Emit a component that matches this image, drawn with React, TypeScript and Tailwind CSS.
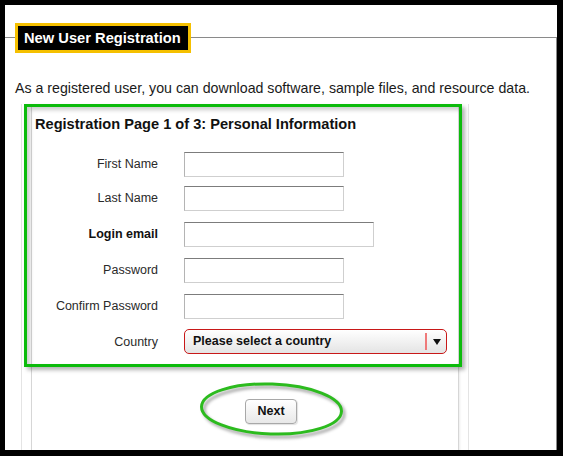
import React from "react";

function Field({ label, bold, width, mt }: { label: string; bold?: boolean; width: string; mt: string }) {
  return (
    <div className={`flex items-center h-[25px] ${mt}`}>
      <div className={`w-[126px] text-right text-[12.5px] leading-[15px] text-[#2a2a2a] ${bold ? "font-bold text-[#111]" : ""}`}>
        {label}
      </div>
      <input
        type="text"
        className={`ml-[26px] h-[25px] ${width} bg-white border border-[#cfcfcf] border-t-[#7c7c7c] border-l-[#b4b4b4] outline-none`}
      />
    </div>
  );
}

export default function App() {
  return (
    <div className="w-[563px] h-[456px] bg-black pt-[5px] pl-[5px] overflow-hidden">
      <div className="relative w-[552px] h-[445px] bg-white overflow-hidden font-['Liberation_Sans',Arial,sans-serif]">
        <div className="mt-[32px] h-[420px] border-t border-r border-[#8a8a8a] flex flex-col">
          <div className="ml-[10px] -mt-[15px] self-start border-[3px] border-[#f5c000] bg-black pl-[6px] pr-[7px] text-white font-bold text-[14.7px] leading-[24px]">
            New User Registration
          </div>
          <p className="mt-[27px] pl-[10px] text-[14.2px] leading-[16px] text-[#1a1a1a]">
            As a registered user, you can download software, sample files, and resource data.
          </p>
          <div className="ml-[16px] mt-[8px] w-[448px] flex-1 border-x border-[#e4e4e4] flex flex-col">
            <div className="ml-[9px] mt-[3px] w-[428px] flex-1 border-x border-[#d6d6d6] shadow-[1px_0_2px_rgba(0,0,0,0.08)] flex flex-col">
              <h2 className="pt-[9px] pl-[3px] font-bold text-[14.6px] leading-[17px] text-[#111]">
                Registration Page 1 of 3: Personal Information
              </h2>
              <Field label="First Name" width="w-[160px]" mt="mt-[19px]" />
              <Field label="Last Name" width="w-[160px]" mt="mt-[9px]" />
              <Field label="Login email" bold width="w-[190px]" mt="mt-[11px]" />
              <Field label="Password" width="w-[160px]" mt="mt-[11px]" />
              <Field label="Confirm Password" width="w-[160px]" mt="mt-[11px]" />
              <div className="flex items-center h-[25px] mt-[10px]">
                <div className="w-[126px] text-right text-[12.5px] leading-[15px] text-[#2a2a2a] pt-[2px]">Country</div>
                <div className="ml-[26px] h-[25px] w-[263px] rounded-[5px] border border-[#c81818] bg-linear-to-b from-white to-[#e4e4e4] flex items-center">
                  <span className="pl-[8px] flex-1 font-bold text-[12.5px] leading-[15px] text-[#111]">
                    Please select a country
                  </span>
                  <div className="w-[2px] h-[17px] bg-[#ef7a7a]" />
                  <div className="w-[19px] flex items-center justify-center">
                    <svg width="8" height="6" viewBox="0 0 8 6">
                      <polygon points="0,0 8,0 4,6" fill="#111" />
                    </svg>
                  </div>
                </div>
              </div>
              <div className="mt-[44px] ml-[213px]">
                <button className="w-[52px] h-[25px] rounded-[4px] border border-[#a8a8a8] bg-linear-to-b from-white to-[#e8e8e8] shadow-[1px_1px_1px_rgba(0,0,0,0.12)] font-bold text-[12.5px] text-[#111]">
                  Next
                </button>
              </div>
            </div>
          </div>
        </div>

        <div className="absolute left-[19px] top-[99px] w-[438px] h-[263px] border-[3px] border-[#0cbb0c] shadow-[3px_3px_4px_rgba(0,0,0,0.3),inset_3px_3px_4px_rgba(0,0,0,0.2)] pointer-events-none" />

        <svg className="absolute left-[190px] top-[373px] pointer-events-none" width="164" height="68" viewBox="0 0 164 68">
          <defs>
            <filter id="blur" x="-20%" y="-20%" width="140%" height="140%">
              <feGaussianBlur stdDeviation="1.5" />
            </filter>
          </defs>
          <ellipse cx="79" cy="34" rx="70" ry="25" fill="none" stroke="rgba(0,0,0,0.35)" strokeWidth="3" filter="url(#blur)" transform="rotate(2 79 34)" />
          <ellipse cx="76.5" cy="31" rx="70" ry="25" fill="none" stroke="#2cbb1e" strokeWidth="3" transform="rotate(2 76.5 31)" />
        </svg>
      </div>
    </div>
  );
}
